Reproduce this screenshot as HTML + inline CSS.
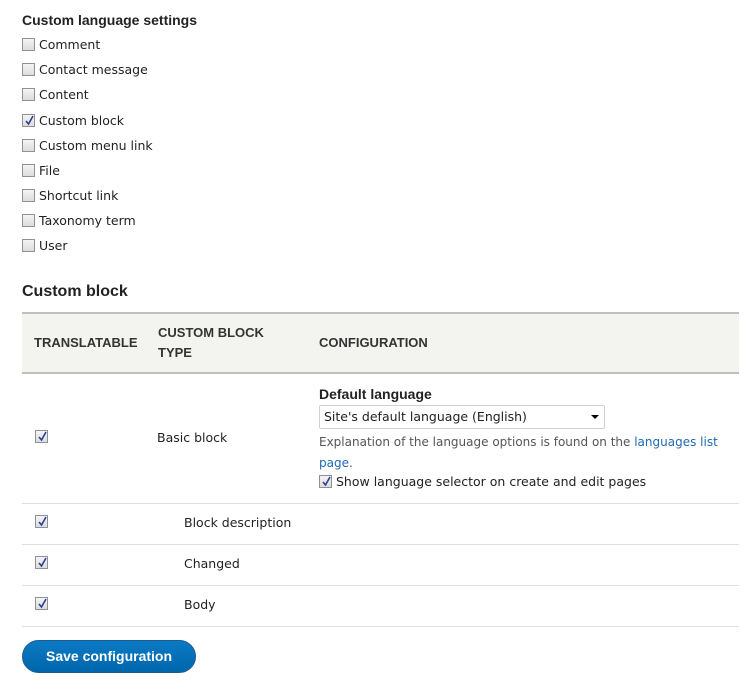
<!DOCTYPE html>
<html><head><meta charset="utf-8"><style>
*{margin:0;padding:0;box-sizing:border-box}
body{width:752px;height:691px;background:#fff;position:relative;font-family:"DejaVu Sans","Liberation Sans",sans-serif;font-size:12.5px;color:#222;overflow:hidden}
.a{position:absolute;white-space:nowrap;line-height:16px}
.cb{position:absolute;width:13px;height:13px;border:1px solid #8f8f9d;background:linear-gradient(#f4f4f4,#dcdcdc)}
.cb svg{position:absolute;left:1px;top:0px}
.b{font-family:"Liberation Sans",sans-serif;font-weight:bold}
.line{position:absolute;left:22px;width:717px;height:1px;background:#e2e0da}
.th{font-family:"Liberation Sans",sans-serif;font-weight:bold;font-size:13px;color:#333;position:absolute;line-height:20px}
</style></head><body>
<div class="a b" style="left:22px;top:12px;font-size:14px;color:#222">Custom language settings</div>

<div class="cb" style="left:22px;top:38px"></div><div class="a" style="left:39px;top:37px">Comment</div>
<div class="cb" style="left:22px;top:63px"></div><div class="a" style="left:39px;top:62px">Contact message</div>
<div class="cb" style="left:22px;top:88px"></div><div class="a" style="left:39px;top:87px">Content</div>
<div class="cb" style="left:22px;top:114px"><svg width="11" height="11" viewBox="0 0 11 11"><path d="M2 6l2.5 3L9 1" stroke="#2b3f8f" stroke-width="1.6" fill="none"/></svg></div><div class="a" style="left:39px;top:113px">Custom block</div>
<div class="cb" style="left:22px;top:139px"></div><div class="a" style="left:39px;top:138px">Custom menu link</div>
<div class="cb" style="left:22px;top:164px"></div><div class="a" style="left:39px;top:163px">File</div>
<div class="cb" style="left:22px;top:189px"></div><div class="a" style="left:39px;top:188px">Shortcut link</div>
<div class="cb" style="left:22px;top:214px"></div><div class="a" style="left:39px;top:213px">Taxonomy term</div>
<div class="cb" style="left:22px;top:239px"></div><div class="a" style="left:39px;top:238px">User</div>

<div class="a b" style="left:22px;top:283px;font-size:16px;line-height:18px">Custom block</div>

<div style="position:absolute;left:22px;top:312px;width:717px;height:62px;background:#f3f3f0;border-top:2px solid #c0c0b8;border-bottom:2px solid #c0c0b8"></div>
<div class="th" style="left:34px;top:333px">TRANSLATABLE</div>
<div class="th" style="left:158px;top:323px">CUSTOM BLOCK<br>TYPE</div>
<div class="th" style="left:319px;top:333px">CONFIGURATION</div>

<div class="cb" style="left:35px;top:430px"><svg width="11" height="11" viewBox="0 0 11 11"><path d="M2 6l2.5 3L9 1" stroke="#2b3f8f" stroke-width="1.6" fill="none"/></svg></div>
<div class="a" style="left:157px;top:430px">Basic block</div>
<div class="a b" style="left:319px;top:386px;font-size:14px">Default language</div>
<div style="position:absolute;left:319px;top:405px;width:286px;height:24px;border:1px solid #d0d0d0;border-radius:2px;background:#fff"></div>
<div class="a" style="left:324px;top:409px">Site's default language (English)</div>
<div style="position:absolute;left:591px;top:415px;border-left:4px solid transparent;border-right:4px solid transparent;border-top:4px solid #000"></div>
<div class="a" style="left:319px;top:432px;font-size:12px;color:#555;line-height:21px;white-space:normal;width:405px">Explanation of the language options is found on the <span style="color:#1f6ab2">languages list page</span>.</div>
<div class="cb" style="left:319px;top:475px"><svg width="11" height="11" viewBox="0 0 11 11"><path d="M2 6l2.5 3L9 1" stroke="#2b3f8f" stroke-width="1.6" fill="none"/></svg></div>
<div class="a" style="left:336px;top:474px">Show language selector on create and edit pages</div>

<div class="line" style="top:503px"></div>
<div class="cb" style="left:35px;top:515px"><svg width="11" height="11" viewBox="0 0 11 11"><path d="M2 6l2.5 3L9 1" stroke="#2b3f8f" stroke-width="1.6" fill="none"/></svg></div>
<div class="a" style="left:184px;top:515px">Block description</div>
<div class="line" style="top:544px"></div>
<div class="cb" style="left:35px;top:556px"><svg width="11" height="11" viewBox="0 0 11 11"><path d="M2 6l2.5 3L9 1" stroke="#2b3f8f" stroke-width="1.6" fill="none"/></svg></div>
<div class="a" style="left:184px;top:556px">Changed</div>
<div class="line" style="top:585px"></div>
<div class="cb" style="left:35px;top:597px"><svg width="11" height="11" viewBox="0 0 11 11"><path d="M2 6l2.5 3L9 1" stroke="#2b3f8f" stroke-width="1.6" fill="none"/></svg></div>
<div class="a" style="left:184px;top:597px">Body</div>
<div class="line" style="top:626px"></div>

<div style="position:absolute;left:22px;top:640px;width:174px;height:33px;border-radius:17px;background:linear-gradient(#0a7ac4,#0066ab);border:1px solid #1e5c90;color:#fff;font-family:'Liberation Sans',sans-serif;font-weight:bold;font-size:14px;text-align:center;line-height:31px">Save configuration</div>
</body></html>
